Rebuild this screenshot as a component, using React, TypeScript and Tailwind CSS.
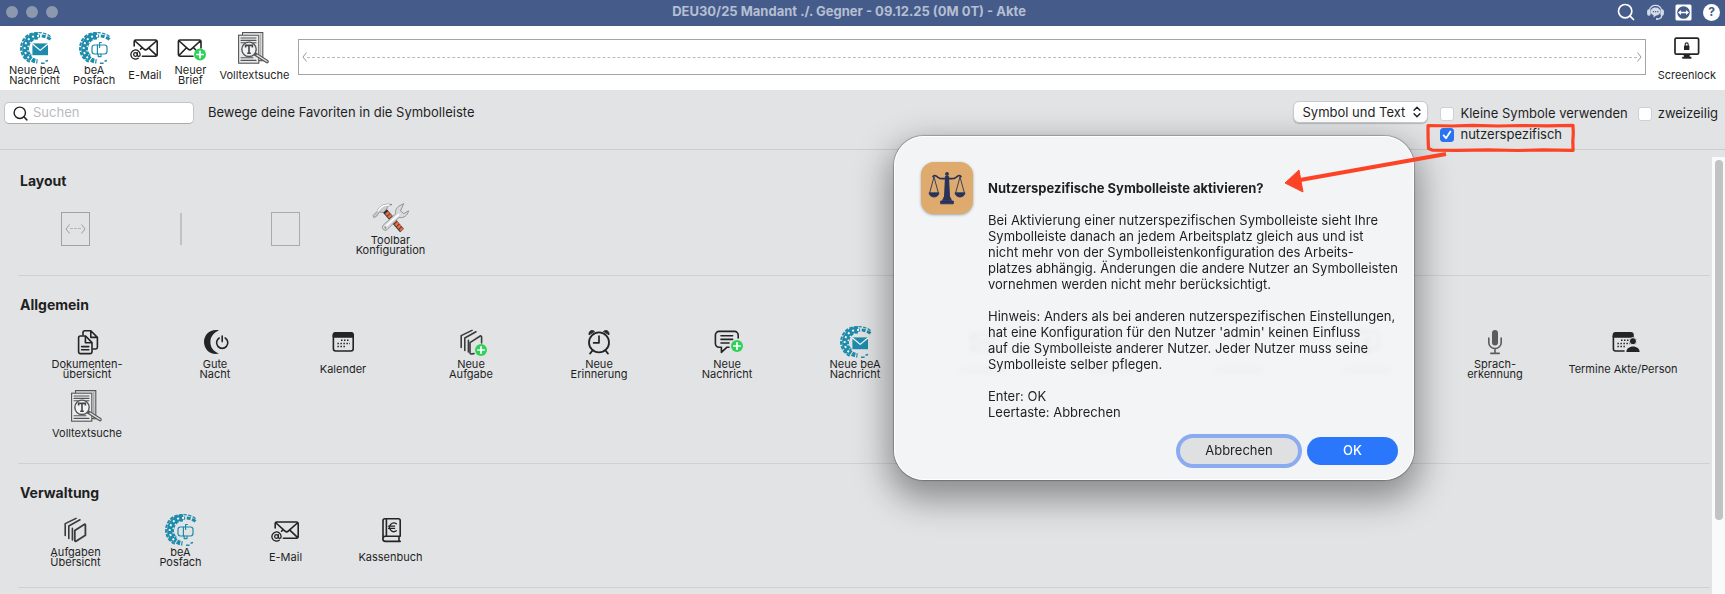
import { useState } from "react";
import type { ReactNode } from "react";
import { AtSign, ChevronsUpDown, Search } from "lucide-react";

const TEAL = "#1f8bab";

function Icon({ children }: { children: ReactNode }) {
  return (
    <svg viewBox="0 0 32 32" className="block size-8 shrink-0 overflow-visible" fill="none" stroke="#242424" strokeWidth="1.6" strokeLinejoin="round" strokeLinecap="round" aria-hidden="true">
      {children}
    </svg>
  );
}

function Plus({ x, y }: { x: number; y: number }) {
  return (
    <g transform={`translate(${x} ${y})`}>
      <circle r="6" fill="#30d158" stroke="none" />
      <path d="M-3.2 0H3.2M0-3.2V3.2" stroke="#fff" strokeWidth="1.7" />
    </g>
  );
}

function BeaRing() {
  return (
    <g stroke={TEAL} strokeLinecap="butt">
      <path d="M19 4A12.4 12.4 0 0 0 10.500 25.500" strokeWidth="7" />
      <path d="M31.500 4.600C27.500 1.400 23 .4 18 .7" strokeWidth="1.400" strokeDasharray="3.400 1.400" />
      <path d="M31.500 7.400C28 4.600 24 3.600 19 4.200" strokeWidth="3" strokeDasharray="4 1.600" />
      <path d="M9.500 24.500c2.500 3 5 4.400 9 4.800" strokeWidth="4.600" strokeDasharray="3.600 1.100" />
      <path d="M18.500 1A15.200 15.200 0 0 0 11 30" strokeWidth="2" strokeDasharray="3.600 1.200" />
      <path d="M22 31.200h3.600M26.500 29.200l2.500-.6" strokeWidth="1.500" />
      <path d="M20 4A12.600 12.600 0 0 0 10.500 26.400" stroke="#fff" strokeWidth="1.900" strokeDasharray="2 3" />
      <path d="M18.500 7.400A9.600 9.600 0 0 0 11 23" stroke="#fff" strokeWidth="1.200" strokeDasharray="1.500 3" strokeDashoffset="2" />
    </g>
  );
}

function BeaMessage() {
  return (
    <Icon>
      <BeaRing />
      <rect x="13.4" y="11.4" width="15.6" height="11.8" fill={TEAL} stroke="none" />
      <path d="M13.6 12l7.6 6.4 7.6-6.4" stroke="#fff" strokeWidth="1.2" />
    </Icon>
  );
}

function BeaMailbox() {
  return (
    <Icon>
      <BeaRing />
      <g stroke={TEAL} strokeWidth="1.2">
        <rect x="14" y="13" width="15" height="9" rx="2.4" />
        <path d="M19.400 13V22M23 22v2.600h-2.800V22M21.600 15.500v-5h1.800" />
      </g>
    </Icon>
  );
}

function Mail() {
  return (
    <Icon>
      <path d="M5.2 14V9.6a1.6 1.6 0 0 1 1.6-1.6h19.8a1.6 1.6 0 0 1 1.6 1.6v13a1.6 1.6 0 0 1-1.6 1.6H13.4M6 9l9 8.2a2.4 2.4 0 0 0 3.2 0L27.4 9M19.8 16.2l7.4 7M13 16l-1.4 1.2" />
      <AtSign x={1} y={17} width={11} height={11} strokeWidth={2.8} />
    </Icon>
  );
}

function Letter() {
  return (
    <Icon>
      <path d="M19 24.2H6a1.6 1.6 0 0 1-1.6-1.6v-13A1.6 1.6 0 0 1 6 8h19.4A1.6 1.6 0 0 1 27 9.6V16M5.2 9l9 8.2a2.4 2.4 0 0 0 3.2 0L26.2 9M12 16.2l-6.8 7M19.8 16l2 2" />
      <Plus x={26} y={22.5} />
    </Icon>
  );
}

function FullText() {
  return (
    <Icon>
      <g stroke="#555" strokeWidth="1.1" strokeLinejoin="miter">
        <path d="M4.5 3V.6h20.3v28H21" />
        <path d="M22.8 2v26" stroke="#999" />
        <rect x=".6" y="3.2" width="20.2" height="28" fill="#e9eaec" />
        <path d="M3 6h15M3 8.4h15M3 10.8h4M15 10.8h3M3 25.8h12M3 28.4h15" />
        <path d="M17 22l12 7.6" strokeWidth="3.6" strokeLinecap="round" />
        <path d="M19 23.2l10 6.3" stroke="#ddd" strokeWidth="1.4" strokeLinecap="round" />
        <circle cx="11" cy="17.3" r="7.2" fill="#f1f2f3" strokeWidth="1.4" />
      </g>
      <path d="M7.6 15.6v-2.2h6.8v2.2M11 13.4v7.8M9.2 21.2h3.6" stroke="#444" strokeWidth="1.6" strokeLinecap="butt" strokeLinejoin="miter" />
    </Icon>
  );
}

function Monitor() {
  return (
    <Icon>
      <rect x="4" y="6.2" width="23.6" height="16" rx="1.4" strokeWidth="1.7" />
      <path d="M13 22.5h5.6v2.4h1.6v1.6h-8.8v-1.6H13z" fill="#242424" strokeWidth=".4" />
      <rect x="13" y="13.6" width="5.4" height="4.4" rx=".6" fill="#242424" stroke="none" />
      <path d="M14.2 13.6v-1.2a1.5 1.5 0 0 1 3 0v1.2" strokeWidth="1.1" />
    </Icon>
  );
}

function Tools() {
  return (
    <Icon>
      <path d="M9.5 8.5L27 28.5" stroke="#26303a" strokeWidth="5" strokeLinecap="butt" />
      <path d="M11.5 10.5L27 28" stroke="#f06a3c" strokeWidth="4" strokeDasharray="2.8 .7" strokeLinecap="butt" />
      <path d="M-1.6 13.2L2.2 9.4C4 4 10 .8 17 2.6c-3.6.6-5 2-5 4.4L8.4 10.6 4.6 9.8l-3 4.4-2.400 1.200z" fill="#c9cbcc" stroke="#77797a" strokeWidth=".7" />
      <path d="M3 9C5.4 4.6 9.6 2.6 14 3" stroke="#fff" strokeWidth="1.4" />
      <path d="M28.4 1.8l-4.6 2.4c-3 2.4-3.6 4.6-3 7.4L8.2 23.2c-2.4 2.6.8 6.6 4 4.4L24 15.4c4.6 1.2 8.6-2 9.6-6.6l-4.8 2.8-3-2.4z" fill="#d8dadb" stroke="#808283" strokeWidth=".8" />
      <path d="M11.4 23.6L23.6 12.6" stroke="#fff" strokeWidth="1.6" />
      <circle cx="10.4" cy="25.4" r="1" fill="#888" stroke="none" />
    </Icon>
  );
}

function Documents() {
  return (
    <Icon>
      <path d="M12 9V6.6A1.8 1.8 0 0 1 13.8 4.8h6L26.4 11.4v9.8a1.8 1.8 0 0 1-1.8 1.8H22M19.8 5v6.4h6.4" />
      <path d="M7.6 11.8A1.8 1.8 0 0 1 9.4 10h5.2l6.4 6.6v9.2a1.8 1.8 0 0 1-1.8 1.8H9.4a1.8 1.8 0 0 1-1.8-1.8zM14.4 10.2v6.6h6.4M10.6 20.6h7.2M10.6 23.8h7.2" />
    </Icon>
  );
}

function Night() {
  return (
    <Icon>
      <path d="M20 4.4C13.400 7 11.400 11.600 11.400 16s2 9 8.600 11.600C11.5 29.6 5 23.4 5 16S11.5 2.4 20 4.4z" fill="#242424" stroke="none" />
      <path d="M20.2 12a5.6 5.6 0 1 0 6 0M23.2 10v5.6" />
    </Icon>
  );
}

function CalendarGrid() {
  return (
    <>
      <path d="M6.4 11V9A2.2 2.2 0 0 1 8.6 6.8h15.2A2.2 2.2 0 0 1 26 9v2z" fill="#242424" />
      <path d="M14 14.3h9M10.4 17.4h12.6M10.4 20.5h9" stroke="#242424" strokeWidth="1.5" strokeLinecap="butt" strokeDasharray="1.5 1.5" />
    </>
  );
}

function Calendar() {
  return (
    <Icon>
      <rect x="6.4" y="7" width="19.8" height="18" rx="2.2" />
      <CalendarGrid />
    </Icon>
  );
}

function CalendarPerson() {
  return (
    <Icon>
      <path d="M6.4 10v13a2 2 0 0 0 2 2H17" />
      <CalendarGrid />
      <circle cx="26" cy="15.2" r="3.6" fill="#242424" stroke="#e2e3e5" strokeWidth="1" />
      <path d="M19.4 26c0-3.4 2.8-5.6 6.6-5.6s6.6 2.2 6.6 5.6z" fill="#242424" stroke="none" />
    </Icon>
  );
}

function TaskStack({ plus }: { plus?: boolean }) {
  return (
    <Icon>
      <g stroke="#3b3b3b">
        <path d="M6.2 21.5V9.6L17 4.4M9.8 24.5V12L21 5.8M13.4 26V14.2" />
        {plus ? <path d="M19 27.6l-3 .4a1 1 0 0 1-1-1V16.6L25.2 10a1 1 0 0 1 1.4 1v6" /> : <path d="M15.8 16.4l9.4-6a.8.8 0 0 1 1.2.7v10.2l-9.4 5.9a.8.8 0 0 1-1.2-.7z" strokeWidth="1.8" />}
      </g>
      {plus && <Plus x={26} y={24} />}
    </Icon>
  );
}

function Alarm() {
  return (
    <Icon>
      <circle cx="16" cy="16.4" r="10" strokeWidth="1.8" />
      <path d="M16 10v6.8h-5.4M9.4 24.6L7 27.6M22.6 24.6l2.4 3" strokeWidth="1.7" />
      <path d="M6 8.4C5.6 5 9 3.4 11.2 5.2zM26 8.4C26.4 5 23 3.4 20.8 5.2z" fill="#242424" strokeWidth="1" />
    </Icon>
  );
}

function Message() {
  return (
    <Icon>
      <path d="M27.2 12V9a3.6 3.6 0 0 0-3.6-3.6H8A3.6 3.6 0 0 0 4.4 9v8.6A3.6 3.6 0 0 0 8 21.2h2.4v5.2l5.6-5.2h2M10 9.8h11.6M10 13.4h11.6M10 17h8" />
      <Plus x={26} y={20} />
    </Icon>
  );
}

function Mic() {
  return (
    <Icon>
      <rect x="13" y="4" width="6" height="15.4" rx="3" fill="#5c5c5c" stroke="none" />
      <path d="M9.8 12v4.4a6.2 6.2 0 0 0 12.4 0V12M16 22.6V27M11.8 27.4h8.4" stroke="#5c5c5c" />
    </Icon>
  );
}

function CashBook() {
  return (
    <Icon>
      <path d="M8 25.6V6.8A2 2 0 0 1 10 4.8h13.4a1.8 1.8 0 0 1 1.8 1.8v15.6H10.4a2.6 2.6 0 0 0 0 5.2h14.8M11.4 5v17M24 22.4v5" />
      <path d="M21.4 9.8a4.3 4.3 0 1 0 0 7M13.6 12.2h6M13.6 14.4h6" strokeWidth="1.3" />
    </Icon>
  );
}

function Caption({ text }: { text: string }) {
  return <span className="flex h-5 items-center whitespace-pre text-center text-[11px] leading-[10px] text-[#1f1f1f]">{text}</span>;
}

function Item({ icon, text }: { icon: ReactNode; text: string }) {
  return (
    <button type="button" className="flex h-[53px] flex-col items-center gap-px justify-self-center">
      {icon}
      <Caption text={text} />
    </button>
  );
}

function Hidden({ icon }: { icon: ReactNode }) {
  return (
    <span aria-hidden="true" className="flex h-[53px] flex-col items-center gap-1 justify-self-center">
      {icon}
      <span className="mt-1 h-2 w-12 rounded bg-[#a8a8a8]" />
    </span>
  );
}

function Section({ title, children }: { title: string; children: ReactNode }) {
  return (
    <section className="ml-[18px] mr-0.5 border-b border-[#d0d1d3] py-5">
      <h2 className="mb-3 ml-0.5 h-[18px] text-sm font-bold leading-[18px] text-[#1f1f1f]">{title}</h2>
      {children}
    </section>
  );
}

function Check({ label, defaultChecked }: { label: string; defaultChecked?: boolean }) {
  const [on, setOn] = useState(!!defaultChecked);
  return (
    <label className="flex h-5 items-center gap-1.5 whitespace-nowrap">
      <span className="relative flex size-3.5">
        <input type="checkbox" checked={on} onChange={() => setOn(!on)} className="size-3.5 appearance-none rounded-[3px] border border-[#cfd0d2] bg-white checked:border-[#2a74f0] checked:bg-[#2a74f0]" />
        {on && (
          <svg viewBox="0 0 14 14" className="pointer-events-none absolute inset-0 size-3.5" fill="none" stroke="#fff" strokeWidth="1.8" strokeLinecap="round" strokeLinejoin="round">
            <path d="M3.6 7.4L6 10.2l4.4-6.6" />
          </svg>
        )}
      </span>
      {label}
    </label>
  );
}

function Scales() {
  return (
    <svg viewBox="0 0 52 52" className="size-[52px] shrink-0 rounded-[13px] bg-[#deaa6e] shadow-[0_1px_3px_rgba(0,0,0,0.35)]" fill="none" stroke="#28335a" strokeWidth="1.2" strokeLinejoin="round">
      <circle cx="26" cy="12" r="1.9" fill="#28335a" stroke="none" />
      <path d="M24.6 14.5h2.800l1 20h-4.800z" fill="#28335a" />
      <path d="M23 35h6l1.5 3.500h-9zM19.600 39h12.800v2.800H19.600z" fill="#28335a" strokeWidth=".8" />
      <path d="M12 14.5c1.8-1.8 3.6-.4 5 .8 3 2.4 5.4 1.6 9 .7 3.6.9 6 1.7 9-.7 1.4-1.2 3.2-2.6 5-.8" strokeWidth="1.7" strokeLinecap="round" />
      <path d="M13 15L8.6 31M13 15l4.4 16M39 15l-4.4 16M39 15l4.4 16" strokeWidth=".9" />
      <path d="M8 30.800h10c-.4 5.600-9.600 5.600-10 0zM34 30.800h10c-.4 5.600-9.600 5.600-10 0z" fill="#28335a" strokeWidth=".8" />
    </svg>
  );
}

const message = [
  "Bei Aktivierung einer nutzerspezifischen Symbolleiste sieht Ihre",
  "Symbolleiste danach an jedem Arbeitsplatz gleich aus und ist",
  "nicht mehr von der Symbolleistenkonfiguration des Arbeits-",
  "platzes abhängig. Änderungen die andere Nutzer an Symbolleisten",
  "vornehmen werden nicht mehr berücksichtigt.",
  "",
  "Hinweis: Anders als bei anderen nutzerspezifischen Einstellungen,",
  "hat eine Konfiguration für den Nutzer 'admin' keinen Einfluss",
  "auf die Symbolleiste anderer Nutzer. Jeder Nutzer muss seine",
  "Symbolleiste selber pflegen.",
  "",
  "Enter: OK",
  "Leertaste: Abbrechen",
].join("\n");

function Dialog() {
  return (
    <div role="dialog" aria-labelledby="dlg-title" className="absolute right-[311px] top-[136px] w-[520px] rounded-[30px] border border-white bg-[#f2f4f5]/95 pb-[14px] pl-[26px] pr-[25px] pt-[25px] shadow-[0_0_1px_1px_rgba(0,0,0,0.25),0_14px_34px_6px_rgba(0,0,0,0.38)] backdrop-blur-[2px]">
      <div className="flex gap-[15px]">
        <Scales />
        <div className="pt-[18px] text-[13px] leading-4 text-[#1f1f1f]">
          <h1 id="dlg-title" className="mb-4 whitespace-nowrap font-bold">Nutzerspezifische Symbolleiste aktivieren?</h1>
          <p className="whitespace-pre">{message}</p>
        </div>
      </div>
      <div className="-mr-2.5 mt-[17px] flex justify-end gap-[9px] text-[13px]">
        <button type="button" className="my-px h-[26px] w-[118px] rounded-full bg-[#dfe0e2] text-[#1f1f1f] ring-4 ring-[#8aabf0]">Abbrechen</button>
        <button type="button" className="h-7 w-[91px] rounded-full bg-[#2a77fb] font-medium text-white">OK</button>
      </div>
    </div>
  );
}

function Annotation() {
  return (
    <svg viewBox="0 0 300 80" className="pointer-events-none absolute right-[145px] top-[120px] h-20 w-[300px]" fill="none" stroke="#fd4325" strokeLinejoin="round" aria-hidden="true">
      <path d="M148 5.500l24 .5 20-.6 26 .6 24-.5 25 .3 26-.4.3 8-.5 8 .3 9-30-.6-25 .7-30-.6-30 .4-26-.2-3.600-1.500-.4-10z" strokeWidth="3.200" />
      <path d="M166 34L20 60" strokeWidth="4" />
      <path d="M5 63l14-13 4 22z" fill="#fd4325" strokeWidth="1" />
    </svg>
  );
}

function Chevron({ side }: { side: "left" | "right" }) {
  return (
    <svg viewBox="0 0 5 10" className="h-2.5 w-[5px]" fill="none" stroke="#9b9c9e" aria-hidden="true">
      <path d={side === "left" ? "M4.500.5L1 5l3.500 4.500" : "M.5.5L4 5 .5 9.500"} />
    </svg>
  );
}

export default function App() {
  return (
    <div className="relative flex min-h-screen flex-col overflow-hidden bg-[#e2e3e5] font-['Inter','Liberation_Sans',sans-serif] text-[13px] text-[#1f1f1f]">
      <header className="flex h-[26px] items-center bg-[#455c8b] pb-0.5 pl-1.5 pr-[5px]">
        <div className="flex flex-1 gap-2">
          <span className="size-3 rounded-full bg-[#8d97ad]" />
          <span className="size-3 rounded-full bg-[#8d97ad]" />
          <span className="size-3 rounded-full bg-[#8d97ad]" />
        </div>
        <span className="pr-7 font-bold text-[#b5bfd3]">DEU30/25 Mandant ./. Gegner - 09.12.25 (0M 0T) - Akte</span>
        <div className="flex flex-1 items-center justify-end gap-[11px] text-white">
          <button type="button" aria-label="Suche"><Search size={20} strokeWidth={2} /></button>
          <button type="button" aria-label="Support">
            <svg viewBox="0 0 17 17" className="size-[17px]" fill="none" stroke="#d5dbe8" strokeWidth="1.3">
              <path d="M2.4 6.5a6.2 6.2 0 0 1 12.2 0v5.5c0 1.5-1.200 2.600-3 2.900" />
              <rect x=".8" y="6" width="2.2" height="5" rx="1" fill="#d5dbe8" />
              <rect x="14" y="6" width="2.2" height="5" rx="1" fill="#d5dbe8" />
              <path d="M8.5 3.600c3 0 4.800 1.800 4.800 4s-1.800 4-4.200 4l-2.600 2v-2.300c-1.800-.6-2.800-2-2.800-3.700 0-2.200 1.800-4 4.800-4z" fill="#d5dbe8" stroke="none" />
              <path d="M5.800 7.600h5.600" stroke="#455c8b" strokeDasharray="1.2 1" />
              <path d="M9 15h2.600" strokeWidth="1.8" />
            </svg>
          </button>
          <button type="button" aria-label="Fernwartung">
            <svg viewBox="0 0 17 17" className="size-[17px]">
              <rect x=".5" y=".5" width="16" height="16" rx="1.5" fill="#fff" />
              <circle cx="8.5" cy="8.5" r="6.3" fill="#455c8b" />
              <path d="M3 8.5l3-2.400v1.600h5V6.100l3 2.400-3 2.400V9.300H6v1.600z" fill="#fff" />
            </svg>
          </button>
          <button type="button" aria-label="Hilfe" className="flex size-[17px] items-center justify-center rounded-full bg-white text-xs font-bold text-[#455c8b]">?</button>
        </div>
      </header>

      <nav className="flex h-16 items-start bg-white px-[9px] pt-1.5">
        <div className="flex gap-[13px]">
          <Item icon={<BeaMessage />} text={"Neue beA\nNachricht"} />
          <Item icon={<BeaMailbox />} text={"beA\nPosfach"} />
          <Item icon={<Mail />} text="E-Mail" />
          <Item icon={<Letter />} text={"Neuer\nBrief"} />
          <Item icon={<FullText />} text="Volltextsuche" />
        </div>
        <div className="ml-[9px] mr-3 mt-[7px] flex h-9 flex-1 items-center border border-[#a3a4a6] px-[3px]">
          <Chevron side="left" />
          <span className="flex-1 border-t border-dashed border-[#bbb]" />
          <Chevron side="right" />
        </div>
        <Item icon={<Monitor />} text="Screenlock" />
      </nav>

      <div className="flex h-[60px] shrink-0 items-start justify-between border-b border-[#cccdcf] pl-1 pr-[7px] pt-3">
        <div className="flex items-center gap-[14px]">
          <label className="flex h-[22px] w-[190px] items-center gap-1 rounded-[5px] border border-[#c3c4c6] border-b-[#a9aaac] bg-white px-[7px]">
            <Search size={17} strokeWidth={2} className="shrink-0" />
            <input type="search" placeholder="Suchen" aria-label="Suchen" className="w-full bg-transparent outline-none placeholder:text-[#b9babc]" />
          </label>
          <span>Bewege deine Favoriten in die Symbolleiste</span>
        </div>
        <div className="flex gap-3">
          <div className="relative -mt-px h-[22px] w-[135px]">
            <select aria-label="Darstellung" className="h-[22px] w-full appearance-none rounded-[6px] border border-[#c9cacc] bg-white px-2 leading-5 shadow-[0_1px_1px_rgba(0,0,0,0.2)]">
              <option>Symbol und Text</option>
            </select>
            <ChevronsUpDown size={14} strokeWidth={2.4} className="pointer-events-none absolute right-1 top-1" />
          </div>
          <div className="flex flex-col gap-px pt-0.5">
            <div className="flex gap-2.5">
              <Check label="Kleine Symbole verwenden" />
              <Check label="zweizeilig" />
            </div>
            <Check label="nutzerspezifisch" defaultChecked />
          </div>
        </div>
      </div>

      <div className="flex flex-1">
        <main className="min-w-0 flex-1 pt-0.5">
          <Section title="Layout">
            <div className="ml-[5px] grid h-[53px] grid-cols-[repeat(auto-fill,105px)] items-center justify-items-center">
              <span className="flex h-[34px] w-[29px] items-center border border-[#a0a1a3] px-[3px]">
                <Chevron side="left" />
                <span className="flex-1 border-t border-dashed border-[#b4b5b7]" />
                <Chevron side="right" />
              </span>
              <span className="h-8 w-0.5 bg-[#c0c1c3]" />
              <span className="h-[34px] w-[29px] border border-[#a9aaac]" />
              <Item icon={<Tools />} text={"Toolbar\nKonfiguration"} />
            </div>
          </Section>
          <Section title="Allgemein">
            <div className="ml-[5px] grid grid-cols-[repeat(auto-fill,128px)] gap-y-[11px]">
              <Item icon={<Documents />} text={"Dokumenten-\nübersicht"} />
              <Item icon={<Night />} text={"Gute\nNacht"} />
              <Item icon={<Calendar />} text="Kalender" />
              <Item icon={<TaskStack plus />} text={"Neue\nAufgabe"} />
              <Item icon={<Alarm />} text={"Neue\nErinnerung"} />
              <Item icon={<Message />} text={"Neue\nNachricht"} />
              <Item icon={<BeaMessage />} text={"Neue beA\nNachricht"} />
              <Hidden icon={<Letter />} />
              <Hidden icon={<Documents />} />
              <Hidden icon={<Mic />} />
              <Hidden icon={<Monitor />} />
              <Item icon={<Mic />} text={"Sprach-\nerkennung"} />
              <Item icon={<CalendarPerson />} text="Termine Akte/Person" />
              <Item icon={<FullText />} text="Volltextsuche" />
            </div>
          </Section>
          <Section title="Verwaltung">
            <div className="ml-[5px] grid grid-cols-[repeat(auto-fill,105px)]">
              <Item icon={<TaskStack />} text={"Aufgaben\nÜbersicht"} />
              <Item icon={<BeaMailbox />} text={"beA\nPosfach"} />
              <Item icon={<Mail />} text="E-Mail" />
              <Item icon={<CashBook />} text="Kassenbuch" />
            </div>
          </Section>
        </main>
        <div className="mt-[7px] flex w-[13px] justify-center bg-[#f9fafa] pt-[3px]">
          <span className="h-[360px] w-2 rounded-full bg-[#c1c2c2]" />
        </div>
      </div>

      <Dialog />
      <Annotation />
    </div>
  );
}
